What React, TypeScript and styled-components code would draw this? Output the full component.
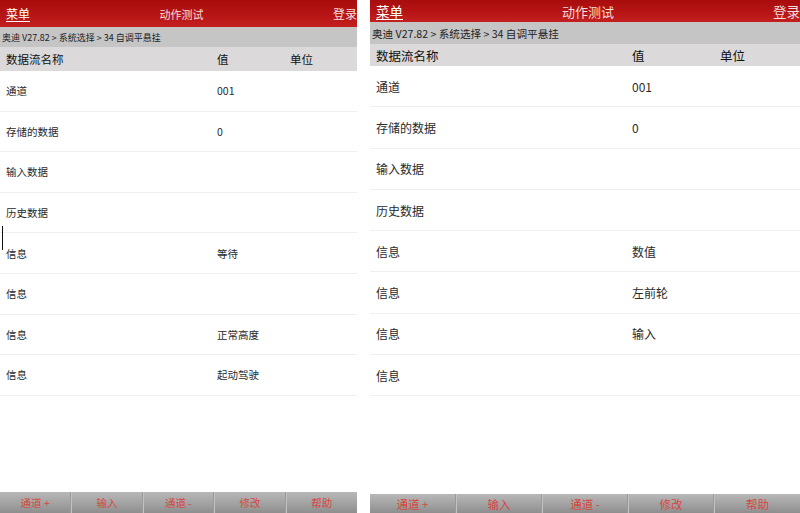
import React from 'react';
import styled, { createGlobalStyle } from 'styled-components';

const GlobalStyle = createGlobalStyle`
  html, body {
    margin: 0;
    padding: 0;
    background: #fff;
  }
  body {
    font-family: "Noto Sans CJK SC", "Liberation Sans", sans-serif;
    overflow: hidden;
  }
`;

interface Dims {
  width: number;
  headerH: number;
  menuFont: number;
  titleFont: number;
  crumbH: number;
  crumbFont: number;
  colH: number;
  colFont: number;
  rowH: number;
  rowFont: number;
  valueX: number;
  unitX: number;
  padX: number;
  toolbarTop: number;
  toolbarFont: number;
}

const Screen = styled.div`
  display: flex;
  gap: 13px;
  width: 800px;
  height: 513px;
  overflow: hidden;
`;

const Panel = styled.div<{ $d: Dims }>`
  position: relative;
  display: flex;
  flex-direction: column;
  width: ${(p) => p.$d.width}px;
  height: 513px;
  flex-shrink: 0;
  overflow: hidden;
`;

const TitleBar = styled.div<{ $d: Dims }>`
  display: grid;
  grid-template-columns: 1fr auto 1fr;
  align-items: center;
  height: ${(p) => p.$d.headerH}px;
  padding-left: ${(p) => p.$d.padX}px;
  background: linear-gradient(#a80c0c, #b81616 60%, #c42020);
  color: #fff;
  font-size: ${(p) => p.$d.titleFont}px;

  > .menu {
    font-size: ${(p) => p.$d.menuFont}px;
    text-decoration: underline;
    text-underline-offset: 2px;
  }
  > .title {
    text-align: center;
    color: #f4dede;
  }
  > .login {
    text-align: right;
    white-space: nowrap;
    color: #f4dede;
    font-size: ${(p) => p.$d.menuFont}px;
  }
`;

const Crumb = styled.div<{ $d: Dims }>`
  display: flex;
  align-items: center;
  height: ${(p) => p.$d.crumbH}px;
  padding-left: ${(p) => p.$d.padX - 4}px;
  background: #c6c5c5;
  color: #222;
  font-size: ${(p) => p.$d.crumbFont}px;
  white-space: nowrap;
`;

const ColumnRow = styled.div<{ $d: Dims; $head?: boolean }>`
  display: grid;
  grid-template-columns: ${(p) => p.$d.valueX - p.$d.padX}px ${(p) => p.$d.unitX - p.$d.valueX}px 1fr;
  align-items: center;
  height: ${(p) => (p.$head ? p.$d.colH : p.$d.rowH)}px;
  box-sizing: border-box;
  padding-left: ${(p) => p.$d.padX}px;
  background: ${(p) => (p.$head ? '#dbd9d9' : '#fff')};
  color: ${(p) => (p.$head ? '#111' : '#2a2a2a')};
  font-size: ${(p) => (p.$head ? p.$d.colFont : p.$d.rowFont)}px;
  border-bottom: ${(p) => (p.$head ? 'none' : '1.5px solid #f0efef')};
`;

const List = styled.div`
  flex: 1;
`;

const Toolbar = styled.div<{ $d: Dims }>`
  display: grid;
  grid-template-columns: repeat(5, 1fr);
  height: ${(p) => 513 - p.$d.toolbarTop}px;
  background: linear-gradient(#b8b8b8, #a4a4a4 50%, #8e8e8e);
`;

const ToolButton = styled.div<{ $d: Dims }>`
  display: flex;
  align-items: center;
  justify-content: center;
  color: #d8473f;
  font-size: ${(p) => p.$d.toolbarFont}px;
  border-right: 1px solid #9a9a9a;
  border-left: 1px solid #c2c2c2;
  &:first-child { border-left: none; }
  &:last-child { border-right: none; }
`;

const Caret = styled.div`
  position: absolute;
  left: 2px;
  top: 226px;
  width: 1px;
  height: 24px;
  background: #111;
`;

const leftDims: Dims = {
  width: 357,
  headerH: 27,
  menuFont: 12,
  titleFont: 11,
  crumbH: 20,
  crumbFont: 9,
  colH: 24,
  colFont: 11.5,
  rowH: 40.6,
  rowFont: 10.5,
  valueX: 217,
  unitX: 290,
  padX: 6,
  toolbarTop: 492,
  toolbarFont: 10.5,
};

const rightDims: Dims = {
  width: 430,
  headerH: 22,
  menuFont: 13.5,
  titleFont: 13,
  crumbH: 22,
  crumbFont: 10.6,
  colH: 22,
  colFont: 12.5,
  rowH: 41.3,
  rowFont: 12,
  valueX: 262,
  unitX: 350,
  padX: 6,
  toolbarTop: 494,
  toolbarFont: 11.5,
};

const leftRows: [string, string][] = [
  ['通道', '001'],
  ['存储的数据', '0'],
  ['输入数据', ''],
  ['历史数据', ''],
  ['信息', '等待'],
  ['信息', ''],
  ['信息', '正常高度'],
  ['信息', '起动驾驶'],
];

const rightRows: [string, string][] = [
  ['通道', '001'],
  ['存储的数据', '0'],
  ['输入数据', ''],
  ['历史数据', ''],
  ['信息', '数值'],
  ['信息', '左前轮'],
  ['信息', '输入'],
  ['信息', ''],
];

const tools = ['通道 +', '输入', '通道 -', '修改', '帮助'];

const DataScreen = ({ d, rows, caret }: { d: Dims; rows: [string, string][]; caret?: boolean }) => (
  <Panel $d={d}>
    <TitleBar $d={d}>
      <span className="menu">菜单</span>
      <span className="title">动作测试</span>
      <span className="login">登录</span>
    </TitleBar>
    <Crumb $d={d}>奥迪 V27.82 &gt; 系统选择 &gt; 34 自调平悬挂</Crumb>
    <ColumnRow $d={d} $head>
      <span>数据流名称</span>
      <span>值</span>
      <span>单位</span>
    </ColumnRow>
    <List>
      {rows.map(([name, value], i) => (
        <ColumnRow $d={d} key={i}>
          <span>{name}</span>
          <span>{value}</span>
          <span />
        </ColumnRow>
      ))}
    </List>
    <Toolbar $d={d}>
      {tools.map((t) => (
        <ToolButton $d={d} key={t}>{t}</ToolButton>
      ))}
    </Toolbar>
    {caret && <Caret />}
  </Panel>
);

const App = () => (
  <>
    <GlobalStyle />
    <Screen>
      <DataScreen d={leftDims} rows={leftRows} caret />
      <DataScreen d={rightDims} rows={rightRows} />
    </Screen>
  </>
);

export default App;
